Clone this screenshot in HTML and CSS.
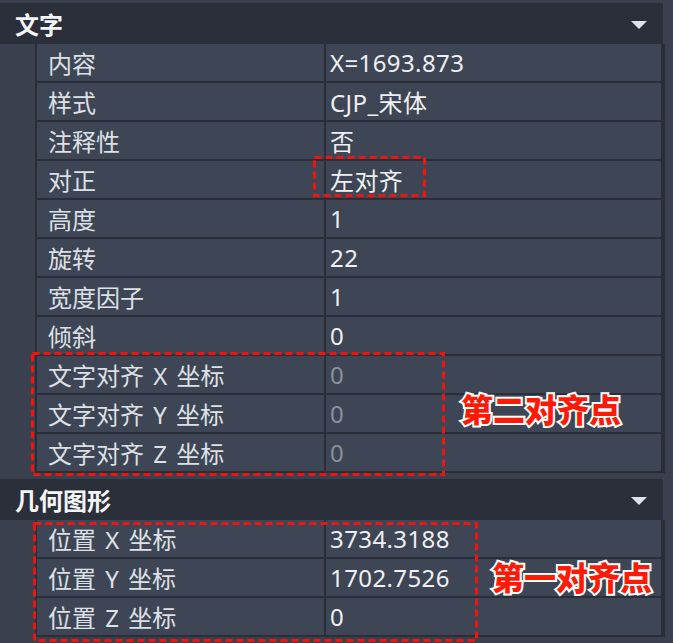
FILE: index.html
```html
<!DOCTYPE html>
<html lang="zh-CN">

<head>
    <meta charset="UTF-8">
    <title>特性</title>
    <link rel="stylesheet" href="styles.css">
</head>

<body>
    <div class="panel">
        <div class="section">
            <div class="head">
                <span class="head-title">文字</span>
                <span class="head-arrow"></span>
            </div>
            <ul class="rows">
                <li><span class="name">内容</span><span class="val">X=1693.873</span></li>
                <li><span class="name">样式</span><span class="val">CJP_宋体</span></li>
                <li><span class="name">注释性</span><span class="val">否</span></li>
                <li><span class="name">对正</span><span class="val">左对齐</span></li>
                <li><span class="name">高度</span><span class="val">1</span></li>
                <li><span class="name">旋转</span><span class="val">22</span></li>
                <li><span class="name">宽度因子</span><span class="val">1</span></li>
                <li><span class="name">倾斜</span><span class="val">0</span></li>
                <li><span class="name">文字对齐 X 坐标</span><span class="val off">0</span></li>
                <li><span class="name">文字对齐 Y 坐标</span><span class="val off">0</span></li>
                <li><span class="name">文字对齐 Z 坐标</span><span class="val off">0</span></li>
            </ul>
        </div>
        <div class="section">
            <div class="head">
                <span class="head-title">几何图形</span>
                <span class="head-arrow"></span>
            </div>
            <ul class="rows">
                <li><span class="name">位置 X 坐标</span><span class="val">3734.3188</span></li>
                <li><span class="name">位置 Y 坐标</span><span class="val">1702.7526</span></li>
                <li><span class="name">位置 Z 坐标</span><span class="val">0</span></li>
            </ul>
        </div>

        <!-- 标注 -->
        <svg class="marks" width="673" height="643">
            <rect x="314.5" y="157.5" width="110" height="38" />
            <rect x="32.5" y="353.5" width="411" height="121" />
            <rect x="34.5" y="523.5" width="442" height="117" />
        </svg>
        <span class="note note-2">第二对齐点</span>
        <span class="note note-1">第一对齐点</span>
    </div>
</body>

</html>
```

FILE: styles.css
```css
* {
    padding: 0;
    margin: 0;
    list-style: none;
}

body {
    background-color: #3a404d;
    font-family: "Noto Sans", "Noto Sans CJK SC", sans-serif;
    width: 673px;
    height: 643px;
    overflow: hidden;
}

.panel {
    position: relative;
    width: 673px;
    height: 643px;
    padding-top: 3px;
    box-sizing: border-box;
}

.section {
    width: 665px;
}

.section + .section {
    margin-top: 6px;
}

.head {
    height: 41px;
    background-color: #2b2f3a;
    display: flex;
    align-items: center;
    justify-content: space-between;
    padding: 0 16px 0 15px;
    width: 663px;
    box-sizing: border-box;
}

.head-title {
    color: #f4f5f7;
    font-size: 24px;
    font-weight: bold;
    font-family: "Noto Sans CJK SC", sans-serif;
}

.head-arrow {
    width: 0;
    height: 0;
    border-left: 8px solid transparent;
    border-right: 8px solid transparent;
    border-top: 8px solid #dfe3e9;
    margin-top: 2px;
}

.rows {
    margin-left: 35px;
    background-color: #2a2e38;
    padding: 0 2px 2px 2px;
    display: grid;
    row-gap: 2px;
}

.rows li {
    height: 37px;
    display: grid;
    grid-template-columns: 287px 335px;
    column-gap: 2px;
    font-size: 24px;
}

.rows span {
    background-color: #3e4554;
    display: flex;
    align-items: center;
    white-space: nowrap;
}

.name {
    color: #dde0e6;
    padding-left: 11px;
    word-spacing: 3px;
}

.val {
    color: #eef0f3;
    padding-left: 4px;
    letter-spacing: 0.4px;
}

.val.off {
    color: #8b919b;
}

.marks {
    position: absolute;
    left: 0;
    top: 0;
}

.marks rect {
    fill: none;
    stroke: #f0140e;
    stroke-width: 3;
    stroke-dasharray: 7 4;
}

.note {
    position: absolute;
    font-family: "Noto Sans CJK SC", sans-serif;
    font-size: 32px;
    font-weight: 900;
    line-height: 1;
    color: #ff1a06;
    -webkit-text-stroke: 4px #fff;
    paint-order: stroke fill;
    white-space: nowrap;
}

.note-2 {
    left: 461px;
    top: 392px;
}

.note-1 {
    left: 492px;
    top: 560px;
}
```
